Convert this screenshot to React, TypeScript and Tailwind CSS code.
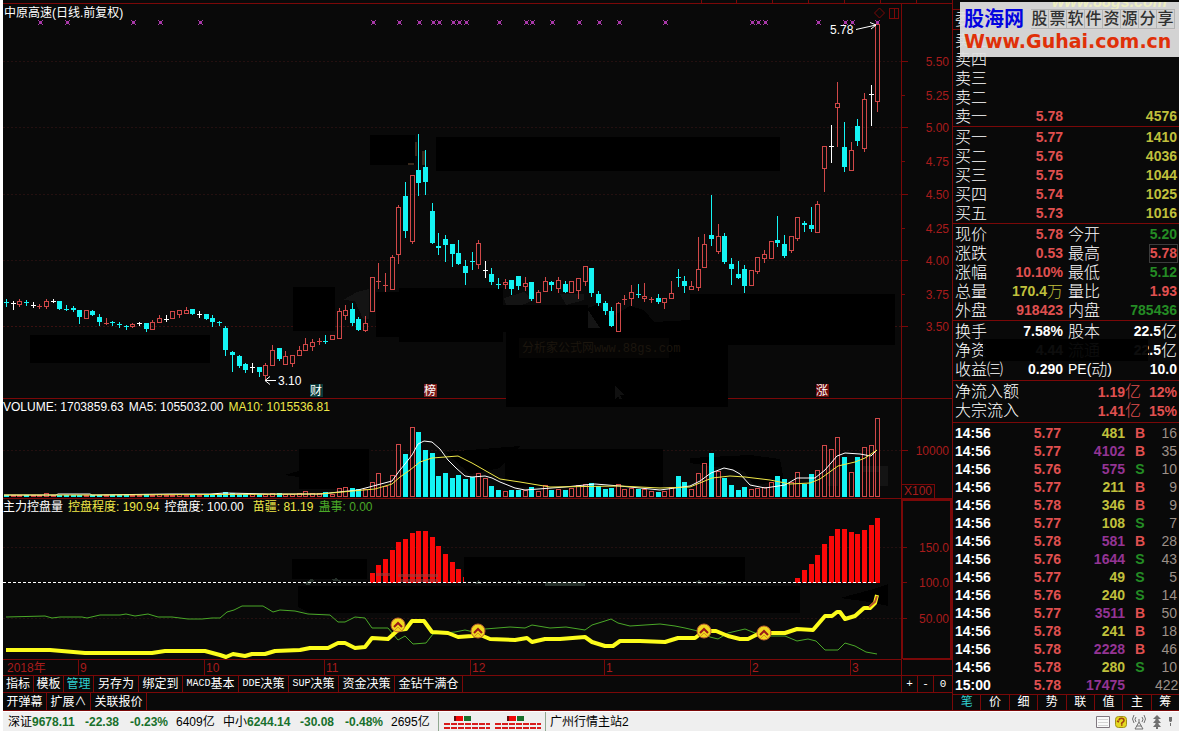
import type { ReactNode } from 'react';
import { clsx } from 'clsx';

type Kind = 'r' | 'c' | 'w';
// kind, body top, body bottom, high, low, top of the volume bar
type Candle = [Kind, number, number, number, number, number];

const RED = '#d04848';
const CYAN = '#14f4f4';
const LINE = '#7a0808';
const AXIS_TEXT = '#a81c1c';

const candles: Candle[] = [
    ['c', 302, 303, 299, 306, 495], ['w', 303, 304, 301, 309, 495], ['r', 301, 304, 299, 306, 495],
    ['c', 302, 303, 300, 305, 495], ['w', 305, 306, 302, 307, 495], ['r', 306, 307, 304, 308, 495],
    ['r', 301, 306, 299, 308, 493], ['w', 301, 302, 299, 302, 495], ['c', 301, 309, 301, 309, 495],
    ['c', 309, 310, 305, 310, 495], ['c', 308, 310, 306, 311, 495], ['c', 310, 317, 310, 323, 495],
    ['r', 310, 318, 310, 318, 495], ['c', 311, 315, 310, 315, 495], ['c', 317, 322, 314, 325, 495],
    ['r', 323, 324, 318, 324, 495], ['c', 322, 323, 321, 325, 495], ['c', 324, 325, 322, 327, 495],
    ['c', 326, 327, 325, 329, 495], ['r', 324, 326, 323, 327, 495], ['w', 323, 324, 322, 325, 495],
    ['c', 323, 329, 323, 331, 494], ['r', 322, 329, 320, 329, 495], ['r', 318, 322, 315, 322, 494],
    ['w', 319, 320, 315, 321, 495], ['r', 311, 318, 311, 318, 495], ['r', 310, 314, 310, 317, 494],
    ['r', 310, 313, 307, 313, 495], ['c', 309, 314, 309, 314, 495], ['w', 314, 315, 311, 317, 495],
    ['c', 314, 319, 314, 319, 495], ['c', 318, 322, 315, 326, 494], ['c', 322, 323, 321, 325, 494],
    ['c', 328, 350, 326, 355, 492], ['c', 352, 355, 351, 371, 493], ['c', 356, 366, 355, 367, 494],
    ['c', 364, 370, 363, 372, 494], ['w', 367, 368, 363, 372, 494], ['c', 367, 372, 367, 376, 494],
    ['r', 365, 375, 363, 379, 494], ['r', 350, 365, 345, 365, 493], ['c', 348, 359, 348, 360, 493],
    ['r', 356, 364, 351, 364, 494], ['r', 355, 363, 355, 366, 494], ['r', 350, 355, 346, 355, 493],
    ['r', 344, 350, 338, 350, 491], ['r', 342, 346, 339, 350, 493], ['r', 341, 342, 338, 344, 493],
    ['c', 341, 342, 335, 343, 492], ['r', 335, 339, 335, 339, 494], ['r', 311, 338, 308, 338, 488],
    ['r', 310, 315, 305, 319, 487], ['c', 309, 323, 303, 325, 488], ['c', 319, 330, 317, 330, 489],
    ['r', 323, 330, 316, 331, 489], ['r', 277, 311, 277, 311, 482], ['r', 281, 282, 263, 288, 473],
    ['r', 285, 286, 273, 291, 486], ['r', 257, 289, 255, 289, 475], ['r', 207, 254, 205, 263, 444],
    ['c', 196, 231, 182, 237, 454], ['r', 175, 241, 175, 243, 427], ['c', 170, 183, 134, 195, 432],
    ['c', 167, 182, 150, 194, 450], ['c', 211, 243, 203, 243, 453], ['c', 246, 248, 233, 254, 476],
    ['c', 239, 245, 235, 261, 473], ['c', 244, 254, 244, 266, 478], ['c', 253, 264, 240, 264, 475],
    ['c', 266, 273, 260, 284, 479], ['c', 261, 262, 252, 269, 477], ['r', 243, 264, 240, 268, 473],
    ['w', 270, 271, 261, 277, 478], ['c', 274, 282, 268, 284, 486], ['c', 284, 285, 278, 288, 490],
    ['r', 282, 284, 279, 288, 491], ['c', 280, 289, 280, 294, 490], ['c', 276, 286, 276, 289, 490],
    ['r', 283, 286, 277, 290, 490], ['c', 282, 299, 282, 300, 487], ['r', 292, 302, 290, 302, 491],
    ['r', 281, 291, 277, 291, 485], ['c', 282, 285, 281, 290, 490], ['r', 280, 288, 277, 292, 489],
    ['c', 284, 292, 281, 292, 490], ['r', 281, 292, 281, 292, 488], ['r', 278, 290, 278, 298, 485],
    ['r', 266, 281, 266, 285, 484], ['c', 268, 293, 268, 296, 483], ['c', 294, 303, 291, 305, 486],
    ['c', 303, 311, 301, 314, 489], ['c', 311, 326, 307, 326, 488], ['r', 303, 331, 302, 331, 484],
    ['r', 299, 300, 295, 304, 489], ['r', 292, 298, 285, 305, 488], ['c', 294, 295, 284, 297, 489],
    ['r', 296, 298, 283, 301, 489], ['r', 299, 300, 297, 302, 491], ['c', 298, 302, 294, 303, 492],
    ['r', 298, 302, 298, 308, 491], ['r', 293, 298, 281, 298, 487], ['c', 277, 278, 269, 286, 476],
    ['c', 281, 286, 276, 292, 482], ['r', 286, 289, 281, 289, 489], ['r', 269, 287, 237, 290, 473],
    ['r', 244, 267, 234, 267, 463], ['c', 235, 239, 195, 245, 453], ['r', 236, 251, 224, 253, 471],
    ['c', 236, 262, 233, 263, 478], ['c', 264, 269, 258, 284, 485], ['c', 274, 278, 261, 278, 490],
    ['c', 269, 286, 265, 292, 487], ['r', 270, 285, 270, 285, 489], ['r', 257, 271, 257, 273, 488],
    ['r', 254, 258, 250, 262, 487], ['r', 241, 258, 241, 258, 482], ['c', 240, 243, 216, 246, 476],
    ['c', 244, 256, 235, 257, 479], ['r', 236, 250, 236, 252, 482], ['r', 217, 238, 217, 240, 472],
    ['c', 223, 225, 221, 231, 484], ['c', 225, 229, 207, 231, 474], ['r', 204, 232, 201, 232, 470],
    ['r', 146, 168, 146, 191, 445], ['w', 146, 147, 125, 162, 449], ['r', 103, 107, 82, 146, 437],
    ['c', 147, 167, 122, 171, 457], ['r', 150, 170, 142, 170, 472], ['c', 126, 141, 119, 145, 457],
    ['r', 99, 148, 93, 151, 447], ['w', 94, 95, 85, 125, 445], ['r', 24, 101, 24, 111, 418],
];

const candleX = (i: number) => Math.round(6 + i * 6.65);

const crosses = [
    40, 67, 133, 160, 200, 373, 399, 419, 433, 439, 453, 459, 466, 499, 526, 532, 552, 579, 599, 619, 665,
    752, 758, 765, 818, 845, 852, 877,
];

const priceAxis: [string, number][] = [
    ['5.50', 61], ['5.25', 95], ['5.00', 127], ['4.75', 161], ['4.50', 194],
    ['4.25', 228], ['4.00', 260], ['3.75', 294], ['3.50', 326],
];

const controlBars: [number, number[]][] = [
    [55, [573, 565, 559, 550, 542, 539, 533, 531, 531, 537, 546, 554, 562, 569]],
    [119, [578, 570, 564, 555, 544, 536, 529, 529, 532, 534, 530, 525, 518]],
];

const months: [string, number][] = [['9', 78], ['10', 204], ['11', 324], ['12', 470], ['1', 604], ['2', 750], ['3', 850]];

const MA5 =
    '4,495 56,495 58,494 90,494 92,495 170,494 210,494 225,493 270,494 320,494 358,490 392,481 400,470 405,464 412,455 418,444 424,441 432,442 440,449 448,460 456,468 465,476 472,477 485,476 492,478 500,482 515,488 525,490 565,487 595,484 620,486 660,490 690,486 700,481 711,473 724,468 733,470 740,474 750,485 765,488 785,485 797,478 815,478 825,470 837,456 845,453 860,454 871,456 877,450';
const MA10 =
    '4,495 100,495 320,494 375,489 392,484 400,477 410,470 420,462 432,458 458,456 472,463 500,479 520,482 550,487 620,486 660,488 690,487 712,478 730,476 745,477 770,480 790,484 810,483 820,479 838,466 855,462 865,458 877,450';
const GREEN_LINE =
    '6,617 45,616 52,618 60,617 82,617 87,618 100,615 120,615 126,614 135,616 148,614 158,617 172,617 188,619 202,619 212,618 220,618 227,612 234,610 242,606 263,606 273,612 280,610 295,611 308,614 330,615 338,622 345,622 355,617 365,618 372,628 388,628 398,640 405,636 413,644 426,643 433,634 455,632 465,630 478,633 485,629 510,627 525,628 532,625 550,628 566,627 585,630 592,625 605,621 611,619 618,623 630,626 645,625 660,624 675,626 685,628 698,631 710,637 718,639 728,633 745,629 755,633 770,636 785,636 797,641 808,639 816,641 825,650 838,650 845,643 855,646 866,652 877,654';
const YELLOW_LINE =
    '6,650 50,650 85,653 152,653 165,651 205,651 220,655 226,657 233,654 245,656 252,654 265,654 275,651 300,650 310,648 328,648 338,643 345,643 355,648 365,647 372,638 388,639 398,630 406,629 412,621 424,621 432,632 448,633 458,637 472,636 478,634 490,639 515,640 527,638 532,642 545,639 560,639 585,637 592,642 605,646 613,646 620,641 640,641 665,642 678,638 695,638 704,631 716,631 728,636 740,639 748,639 760,633 785,633 797,629 813,630 825,616 832,616 837,612 840,612 845,619 855,616 864,608 870,608 875,603 877,595';

function GridLine({ y, color = '#241010' }: { y: number; color?: string }) {
    return <path d={`M3 ${y}.5H901`} stroke={color} strokeDasharray="2 2" />;
}

function Mask({ d }: { d: string }) {
    return <path d={d} fill="#000" />;
}

// small x: four corner pixels round a solid middle
function Cross({ x }: { x: number }) {
    return <path d={`M${x - 2} 20h1v1h-1zM${x + 2} 20h1v1h-1zM${x - 1} 21h3v3h-3zM${x - 2} 24h1v1h-1zM${x + 2} 24h1v1h-1z`} fill="#a838a8" />;
}

function PriceChart() {
    return (
        <div className="relative">
            <svg viewBox="3 0 949 399" className="block w-full" shapeRendering="crispEdges" fontSize="12">
                <path d="M3 3.5H952M701.5 0V3M736.5 0V3M772.5 0V3M808.5 0V3M844.5 0V3M880.5 0V3M916.5 0V3" stroke={LINE} fill="none" />
                <path d="M901.5 3V399M3 398.5H952" stroke={LINE} />
                {[61, 127, 194, 260].map(y => <GridLine key={y} y={y} />)}
                <GridLine y={326} color="#3a1010" />

                <Mask d="M370 135h45v30h-45zM436 137h344v34h-344zM30 335h180v28h-180z" />
                <Mask d="M293 287h42v44h-42zM376 292h23v45h-23zM399 288h104v54h-104zM503 305h85v27h-85z" />
                <Mask d="M588 308l10-4 12 14 20-12 14 4 10 12 36-2v11H588z" />
                <Mask d="M690 294h205v51h-205zM506 331h222v68h-222z" />
                <path d="M343 300l14-8 12-3v30h-6l-8-18zM504 298l20-6 10 8-12 5h-16zM560 294h24v6l-18 5zM588 310l12 18h-12z" fill="#141414" />
                <path d="M519 338h150v20h-150z" fill="#060504" />
                <text x="522" y="352" fill="#1c160e" fontFamily="Liberation Mono, Noto Sans CJK SC, monospace">分析家公式网www.88gs.com</text>
                <path d="M615 386v13l3-3 3 6 2-1-3-6h4z" fill="#101010" />
                <path d="M415 142h2v14h-2zM408 163h6v2h-6zM422 151h4v14h-4z" fill="#3a2a1c" />

                {priceAxis.map(([label, y], i) => (
                    <g key={label}>
                        <path d={i % 2 ? `M902 ${y}.5h3` : `M902 ${y}.5h6`} stroke={LINE} />
                        <text x="949" y={y + 5} textAnchor="end" fill={AXIS_TEXT}>{label}</text>
                    </g>
                ))}

                {crosses.map(x => <Cross key={x} x={x} />)}

                {candles.map(([kind, top, bottom, high, low], i) => {
                    const x = candleX(i);
                    const color = kind === 'r' ? RED : kind === 'c' ? CYAN : '#fff';
                    const hollow = kind === 'r' && bottom - top > 1;
                    return (
                        <g key={i} stroke={color}>
                            <path d={`M${x + 0.5} ${high}V${top}M${x + 0.5} ${bottom}V${low + 1}`} />
                            {hollow
                                ? <rect x={x - 1.5} y={top + 0.5} width="4" height={bottom - top} fill="none" />
                                : <rect x={x - 2} y={top} width="5" height={bottom - top} fill={color} stroke="none" />}
                        </g>
                    );
                })}

                <g fill="none" stroke="#fff" shapeRendering="auto">
                    <path d="M856 29.5l20-4.5M870 22.5l6 2.5-5 4" />
                    <path d="M276 380.5h-11M270 376.5l-5 4 5 4" />
                </g>
                <text x="830" y="34" fill="#fff">5.78</text>
                <text x="278" y="385" fill="#fff">3.10</text>

                <path d="M879.5 8l5 5-5 5-5-5z" fill="none" stroke={LINE} shapeRendering="auto" />
                <path d="M889.5 8.5h9v10h-9zM894.5 8v10" fill="none" stroke={LINE} />

                <path d="M310 384h13v13h-13z" fill="#0b3a3a" />
                <path d="M424 384h13v13h-13z" fill="#7c1c1c" />
                <path d="M816 384h13v13h-13z" fill="#6a0808" />
                <g fill="#fff">
                    <text x="310" y="395">财</text>
                    <text x="424" y="395">榜</text>
                    <text x="816" y="395">涨</text>
                </g>
            </svg>
            <h1 className="absolute left-px top-[5px] text-xs leading-4 text-white">中原高速(日线.前复权)</h1>
        </div>
    );
}

function VolumeChart() {
    return (
        <div className="relative">
            <svg viewBox="3 399 949 100" className="block w-full" shapeRendering="crispEdges" fontSize="12">
                <GridLine y={450} />
                <Mask d="M506 399h222v8h-222zM299 449h70v40h-70zM505 449h158v38h-158zM284 475l15-4v6z" />
                <Mask d="M445 452l75-6-20 22-30 6zM690 458l60-3 30 4 4 22-30 4-10-14-54-8z" />
                <path d="M828 468h10v18h-10zM862 466h26v20h-8v-14h-18z" fill="#141414" />
                <path d="M901.5 399V499M902 450.5h6M902 484.5h32v14M3 498.5H952" stroke={LINE} fill="none" />
                {candles.map(([kind, , , , , top], i) => {
                    const x = candleX(i);
                    return kind === 'c'
                        ? <rect key={i} x={x - 2} y={top} width="5" height={497 - top} fill={CYAN} />
                        : <rect key={i} x={x - 1.5} y={top + 0.5} width="4" height={496 - top} fill="none" stroke={RED} />;
                })}
                <polyline points={MA5} fill="none" stroke="#fff" shapeRendering="auto" />
                <polyline points={MA10} fill="none" stroke="#f0e848" shapeRendering="auto" />
                <text x="949" y="455" textAnchor="end" fill={AXIS_TEXT}>10000</text>
                <text x="904" y="495" fill={AXIS_TEXT}>X100</text>
            </svg>
            <div className="absolute left-0 top-0 flex gap-[5px] text-xs leading-4 text-white">
                <span>VOLUME: 1703859.63</span>
                <span>MA5: 1055032.00</span>
                <span className="text-[#f0e848]">MA10: 1015536.81</span>
            </div>
        </div>
    );
}

function ControlChart() {
    return (
        <div className="relative">
            <svg viewBox="3 499 949 177" className="block w-full" shapeRendering="crispEdges" fontSize="12">
                <GridLine y={547} />
                <GridLine y={618} />
                <Mask d="M292 559h75v20h-75zM464 557h281v24h-281zM298 586h502v27H310l-12-6z" />
                <path d="M303 584l8-5 4 1-6 5zM330 580l6-2 6 4zM478 580l5 4h-8zM518 580l5 4h-6zM545 582h40v4h-40zM693 583l6-3 4 4zM716 584l6-3 4 3z" fill="#26302a" />
                <Mask d="M840 598l30-8 18-6v22l-18-4z" />
                {controlBars.map(([start, tops]) =>
                    tops.map((top, i) => (
                        <rect key={start + i} x={candleX(start + i) - 2} y={top} width="5" height={583 - top} fill="#fa0808" />
                    )),
                )}
                <path d="M463 577v6" stroke="#fa0808" />
                <path d="M398 574h40v3h-40zM400 579h38v3h-38zM376 573h14v3h-14z" fill="#a03c3c" opacity="0.6" />
                <path d="M3 582.5H877" stroke="#fff" strokeDasharray="3 2" />
                <polyline points={GREEN_LINE} fill="none" stroke="#4aa828" shapeRendering="auto" />
                <polyline points={YELLOW_LINE} fill="none" stroke="#fcfc1c" strokeWidth="4" shapeRendering="auto" strokeLinejoin="round" />
                <path d="M869 607l6-5 2-6" fill="none" stroke="#b85030" strokeWidth="2" shapeRendering="auto" />
                {[[398, 625], [478, 631], [704, 631], [764, 633]].map(([x, y]) => (
                    <g key={x} shapeRendering="auto">
                        <circle cx={x} cy={y} r="7" fill="#f0d820" stroke="#c06030" />
                        <path d={`M${x - 4} ${y + 2}l4-4 4 4`} fill="none" stroke="#981818" strokeWidth="2" />
                        <path d={`M${x - 3} ${y + 5}l3-3 3 3`} fill="none" stroke="#d89020" />
                    </g>
                ))}

                <path d="M902 499V659M903 500H951V659H903" stroke={LINE} strokeWidth="2" fill="none" />
                <path d="M903 547.5h4M903 582.5h4M903 618.5h4M3 659.5H902M3 675.5H952M901.5 659V676" stroke={LINE} />
                <g fill={AXIS_TEXT}>
                    <text x="949" y="552" textAnchor="end">150.0</text>
                    <text x="949" y="587" textAnchor="end">100.0</text>
                    <text x="949" y="623" textAnchor="end">50.00</text>
                    <text x="7" y="672">2018年</text>
                    {months.map(([label, x]) => (
                        <g key={label}>
                            <path d={`M${x}.5 660V675`} stroke={LINE} />
                            <text x={x + 2} y="672">{label}</text>
                        </g>
                    ))}
                </g>
            </svg>
            <div className="absolute left-0 top-0 flex gap-[5px] text-xs leading-4 text-white">
                <span>主力控盘量</span>
                <span className="text-[#f0e848]">控盘程度: 190.94</span>
                <span>控盘度: 100.00</span>
                <span className="ml-1 text-[#f0e848]">苗疆: 81.19</span>
                <span className="text-[#4aa828]">蛊事: 0.00</span>
            </div>
        </div>
    );
}

const toolButtons = [
    { latin: '', text: '指标', width: 'w-[31px]' },
    { latin: '', text: '模板', width: 'w-[30px]' },
    { latin: '', text: '管理', width: 'w-[30px]', active: true },
    { latin: '', text: '另存为', width: 'w-[45px]' },
    { latin: '', text: '绑定到', width: 'w-[44px]' },
    { latin: 'MACD', text: '基本', width: 'w-[56px]' },
    { latin: 'DDE', text: '决策', width: 'w-[50px]' },
    { latin: 'SUP', text: '决策', width: 'w-[50px]' },
    { latin: '', text: '资金决策', width: 'w-[56px]' },
    { latin: '', text: '金钻牛满仓', width: 'w-[68px]' },
];

function Toolbar() {
    return (
        <nav className="text-xs leading-4 text-white">
            <div className="flex h-[17px] border-b border-[#7a0808]">
                {toolButtons.map(b => (
                    <button
                        key={b.latin + b.text}
                        className={clsx('flex shrink-0 items-center justify-center whitespace-nowrap border-r border-[#7a0808]', b.width, b.active && 'text-[#30d0d0]')}
                    >
                        {b.latin && <span className="font-['Liberation_Mono'] text-[10px]">{b.latin}</span>}
                        {b.text}
                    </button>
                ))}
                <div className="ml-auto flex border-l border-[#7a0808] font-['Liberation_Mono'] text-[11px]">
                    <button className="w-4 border-r border-[#7a0808]">+</button>
                    <button className="w-4 border-r border-[#7a0808]">-</button>
                    <button className="w-[18px]">0</button>
                </div>
            </div>
            <div className="flex h-[18px] border-b border-[#7a0808]">
                <button className="w-11 border-r border-[#7a0808]">开弹幕</button>
                <button className="w-11 border-r border-[#7a0808]">扩展∧</button>
                <button className="w-14 border-r border-[#7a0808]">关联报价</button>
            </div>
        </nav>
    );
}

const RED_TEXT = 'text-[#e05050]';
const GREEN_TEXT = 'text-[#248c24]';
const YELLOW_TEXT = 'text-[#c0c03c]';
const PURPLE_TEXT = 'text-[#943494]';

const bids = [
    ['买一', '5.77', '1410'],
    ['买二', '5.76', '4036'],
    ['买三', '5.75', '1044'],
    ['买四', '5.74', '1025'],
    ['买五', '5.73', '1016'],
];

const asks = [
    ['卖五', '', ''],
    ['卖四', '', ''],
    ['卖三', '', ''],
    ['卖二', '', ''],
    ['卖一', '5.78', '4576'],
];

function OrderRows({ rows }: { rows: string[][] }) {
    return (
        <table className="w-full table-fixed border-collapse">
            <tbody>
                {rows.map(([label, price, volume]) => (
                    <tr key={label} className="h-[19px]">
                        <th scope="row" className="w-[50px] p-0 pl-0.5 text-left text-base font-light leading-[19px] text-white">{label}</th>
                        <td className={clsx('w-[60px] p-0 text-right text-sm font-bold leading-[19px]', RED_TEXT)}>{price}</td>
                        <td className={clsx('p-0 pr-0.5 text-right text-sm font-bold leading-[19px]', YELLOW_TEXT)}>{volume}</td>
                    </tr>
                ))}
            </tbody>
        </table>
    );
}

interface StatProps {
    label: ReactNode;
    value: string;
    unit?: string;
    color?: string;
    boxed?: boolean;
}

function Stat({ label, value, unit, color = 'text-white', boxed }: StatProps) {
    return (
        <div className="flex h-[19px] items-center justify-between whitespace-nowrap leading-[19px]">
            <dt className="flex text-base font-light leading-[19px] text-white">{label}</dt>
            <dd className={clsx('flex items-center text-sm font-bold leading-[17px]', color, boxed && 'outline outline-[#3c3c3c]')}>
                {value}
                {unit && <span className="text-base font-light leading-[19px]">{unit}</span>}
            </dd>
        </div>
    );
}

function StatGrid({ children }: { children: ReactNode }) {
    return <dl className="grid grid-cols-[108px_1fr] gap-x-[5px] pl-0.5 pr-0.5">{children}</dl>;
}

const ticks: [string, string, string, string, string, string][] = [
    ['14:56', '5.77', '481', YELLOW_TEXT, 'B', '16'],
    ['14:56', '5.77', '4102', PURPLE_TEXT, 'B', '35'],
    ['14:56', '5.76', '575', PURPLE_TEXT, 'S', '10'],
    ['14:56', '5.77', '211', YELLOW_TEXT, 'B', '9'],
    ['14:56', '5.78', '346', YELLOW_TEXT, 'B', '9'],
    ['14:56', '5.77', '108', YELLOW_TEXT, 'S', '7'],
    ['14:56', '5.78', '581', PURPLE_TEXT, 'B', '28'],
    ['14:56', '5.76', '1644', PURPLE_TEXT, 'S', '43'],
    ['14:56', '5.77', '49', YELLOW_TEXT, 'S', '5'],
    ['14:56', '5.76', '240', YELLOW_TEXT, 'S', '14'],
    ['14:56', '5.77', '3511', PURPLE_TEXT, 'B', '50'],
    ['14:56', '5.78', '241', YELLOW_TEXT, 'B', '18'],
    ['14:56', '5.78', '2228', PURPLE_TEXT, 'B', '46'],
    ['14:56', '5.78', '280', YELLOW_TEXT, 'S', '10'],
    ['15:00', '5.78', '17475', PURPLE_TEXT, '', '422'],
];

function TickTable() {
    return (
        <table className="mt-px w-full table-fixed border-collapse text-sm font-bold">
            <tbody>
                {ticks.map(([time, price, volume, color, side, count], i) => (
                    <tr key={i} className="h-[18px] leading-[18px]">
                        <td className="w-[50px] p-0 pl-0.5 text-white">{time}</td>
                        <td className={clsx('w-[58px] p-0 text-right', RED_TEXT)}>{price}</td>
                        <td className={clsx('w-16 p-0 text-right', color)}>{volume}</td>
                        <td className={clsx('w-[30px] p-0 text-center', side === 'S' ? GREEN_TEXT : RED_TEXT)}>{side}</td>
                        <td className="p-0 pr-0.5 text-right font-normal text-[#9c9088]">{count}</td>
                    </tr>
                ))}
            </tbody>
        </table>
    );
}

function Banner() {
    return (
        <div className="absolute left-[7px] right-0 top-0.5 h-[55px] overflow-hidden bg-[#dedede]/95 px-1">
            <div className="absolute -top-2 left-[92px] whitespace-nowrap text-base italic font-bold leading-4 text-[#eeeec0]">www.88gs.com</div>
            <div className="relative flex items-center justify-between pt-[5px]">
                <strong className="text-xl leading-6 text-[#0404e0]">股海网</strong>
                <span className="flex text-base font-medium leading-[18px] text-[#303030]">
                    {'股票软件资源分享'.split('').map(c => (
                        <span key={c} className="w-[18px] border border-l-0 border-[#b4b4b4] text-center">{c}</span>
                    ))}
                </span>
            </div>
            <a href="#" className="relative block whitespace-nowrap font-['DejaVu_Sans'] text-[19px] font-bold leading-5 text-[#e03008]">Www.Guhai.com.cn</a>
        </div>
    );
}

const tabs = ['笔', '价', '细', '势', '联', '值', '主', '筹'];

function QuotePanel() {
    return (
        <aside className="relative w-[227px] shrink-0 border-l border-[#7a0808]">
            <div className="h-[10px] border-b border-[#7a0808]" />
            <div className="h-5 border-b border-[#7a0808] pl-0.5 text-base font-light leading-[19px] text-white">委比</div>
            <section className="border-b border-[#7a0808] pt-px"><OrderRows rows={asks} /></section>
            <section className="border-b border-[#7a0808] pt-px"><OrderRows rows={bids} /></section>
            <section className="border-b border-[#7a0808] pt-px">
                <StatGrid>
                    <Stat label="现价" value="5.78" color={RED_TEXT} />
                    <Stat label="今开" value="5.20" color={GREEN_TEXT} />
                    <Stat label="涨跌" value="0.53" color={RED_TEXT} />
                    <Stat label="最高" value="5.78" color={RED_TEXT} boxed />
                    <Stat label="涨幅" value="10.10%" color={RED_TEXT} />
                    <Stat label="最低" value="5.12" color={GREEN_TEXT} />
                    <Stat label="总量" value="170.4" unit="万" color={YELLOW_TEXT} />
                    <Stat label="量比" value="1.93" color={RED_TEXT} />
                    <Stat label="外盘" value="918423" color={RED_TEXT} />
                    <Stat label="内盘" value="785436" color={GREEN_TEXT} />
                </StatGrid>
            </section>
            <section className="relative border-b border-[#7a0808] py-px">
                <StatGrid>
                    <Stat label="换手" value="7.58%" />
                    <Stat label="股本" value="22.5" unit="亿" />
                    <Stat label="净资" value="4.44" />
                    <Stat label="流通" value="22.5" unit="亿" />
                    <Stat label="收益㈢" value="0.290" />
                    <Stat label={<><b className="text-sm leading-[19px]">PE(</b>动<b className="text-sm leading-[19px]">)</b></>} value="10.0" />
                </StatGrid>
                <div className="absolute left-[30px] right-[31px] top-[18px] h-[22px] bg-black/95" />
            </section>
            <section className="border-b border-[#7a0808] pb-0.5 pt-px">
                {[['净流入额', '1.19', '12%'], ['大宗流入', '1.41', '15%']].map(([label, value, share]) => (
                    <div key={label} className={clsx('flex h-[19px] items-center pl-0.5 pr-0.5 text-sm font-bold', RED_TEXT)}>
                        <span className="flex-1 text-base font-light leading-[19px] text-white">{label}</span>
                        {value}
                        <span className="text-base font-light leading-[19px]">亿</span>
                        <span className="w-9 text-right">{share}</span>
                    </div>
                ))}
            </section>
            <TickTable />
            <div className="flex h-[17px] border-y border-[#7a0808] text-xs leading-[15px] text-white">
                {tabs.map((t, i) => (
                    <button key={t} className={clsx('flex-1 border-r border-[#7a0808] last:border-r-0', i === 0 && 'text-[#30d0d0]')}>{t}</button>
                ))}
            </div>
            <Banner />
        </aside>
    );
}

function IndexQuote({ name, values, amount }: { name: string; values: string[]; amount: string }) {
    return (
        <div className="flex w-[215px] shrink-0 items-center">
            <span>{name}</span>
            <b className="w-[53px] text-[#18702c]">{values[0]}</b>
            <b className="w-[45px] text-[#18702c]">{values[1]}</b>
            <b className="w-[46px] text-[#18702c]">{values[2]}</b>
            <span>{amount}</span>
        </div>
    );
}

function Meter({ offset }: { offset: number }) {
    return (
        <svg width="46" height="16" viewBox="0 0 46 16" shapeRendering="crispEdges">
            <path d={`M${offset} 2h2v5h-2z`} fill="#601010" />
            <path d={`M${offset + 2} 2h7v5h-7z`} fill="#f00808" />
            <path d={`M${offset + 10} 2h7v5h-7z`} fill="#18702c" />
            <path d="M0 10h46M0 14h46" stroke="#d81c1c" strokeWidth="2" strokeDasharray="6 1" />
        </svg>
    );
}

function StatusBar() {
    return (
        <footer className="flex h-5 items-center border-t border-white bg-[#efefef] pl-[5px] text-xs leading-[18px] text-black">
            <IndexQuote name="深证" values={['9678.11', '-22.38', '-0.23%']} amount="6409亿" />
            <IndexQuote name="中小" values={['6244.14', '-30.08', '-0.48%']} amount="2695亿" />
            <div className="flex h-full items-center gap-[5px] border-x border-[#90a890] pl-[5px] pr-1">
                <Meter offset={10} />
                <Meter offset={12} />
            </div>
            <span className="pl-1">广州行情主站2</span>
            <svg className="ml-auto mr-1.5" width="78" height="16" viewBox="0 0 78 16" fill="none">
                <path d="M1.500 2.500h13v11h-13z" fill="#fafafa" stroke="#807880" />
                <path d="M3 5.500h10M3 8.500h10M3 11.500h10" stroke="#d4d4d4" />
                <rect x="20.500" y="2.500" width="11" height="11" rx="3" fill="#e4d820" stroke="#a09018" />
                <path d="M24 6.500c0-3 5-3 5 0 0 2-2.500 1.500-2.500 3.500M24 8l-2-1M26 11h1.500" stroke="#a04010" strokeWidth="1.500" />
                <path d="M44 5v3M44 8l-4 7h8zM41.500 12h5M41 3q-2 2 0 5M47 3q2 2 0 5M39 1q-3 4 0 8M49 1q3 4 0 8" stroke="#707070" />
                <path d="M62 1l4 4h-2.500v1L66 9h-2.500v1l2.500 3h-3v2h-2v-2h-3l2.500-3V9H58l2.500-3V5H58z" fill="#707070" />
                <path d="M74 3h3v4l-1 1h-1l-1-1zM75 9h1v3h-1z" fill="#707070" />
            </svg>
        </footer>
    );
}

export default function App() {
    return (
        <div className="min-h-screen overflow-hidden bg-white px-[3px] font-['Liberation_Sans','Noto_Sans_CJK_SC',sans-serif]">
            <main className="flex bg-[#090909]">
                <div className="min-w-0 flex-1">
                    <PriceChart />
                    <VolumeChart />
                    <ControlChart />
                    <Toolbar />
                </div>
                <QuotePanel />
            </main>
            <StatusBar />
        </div>
    );
}
